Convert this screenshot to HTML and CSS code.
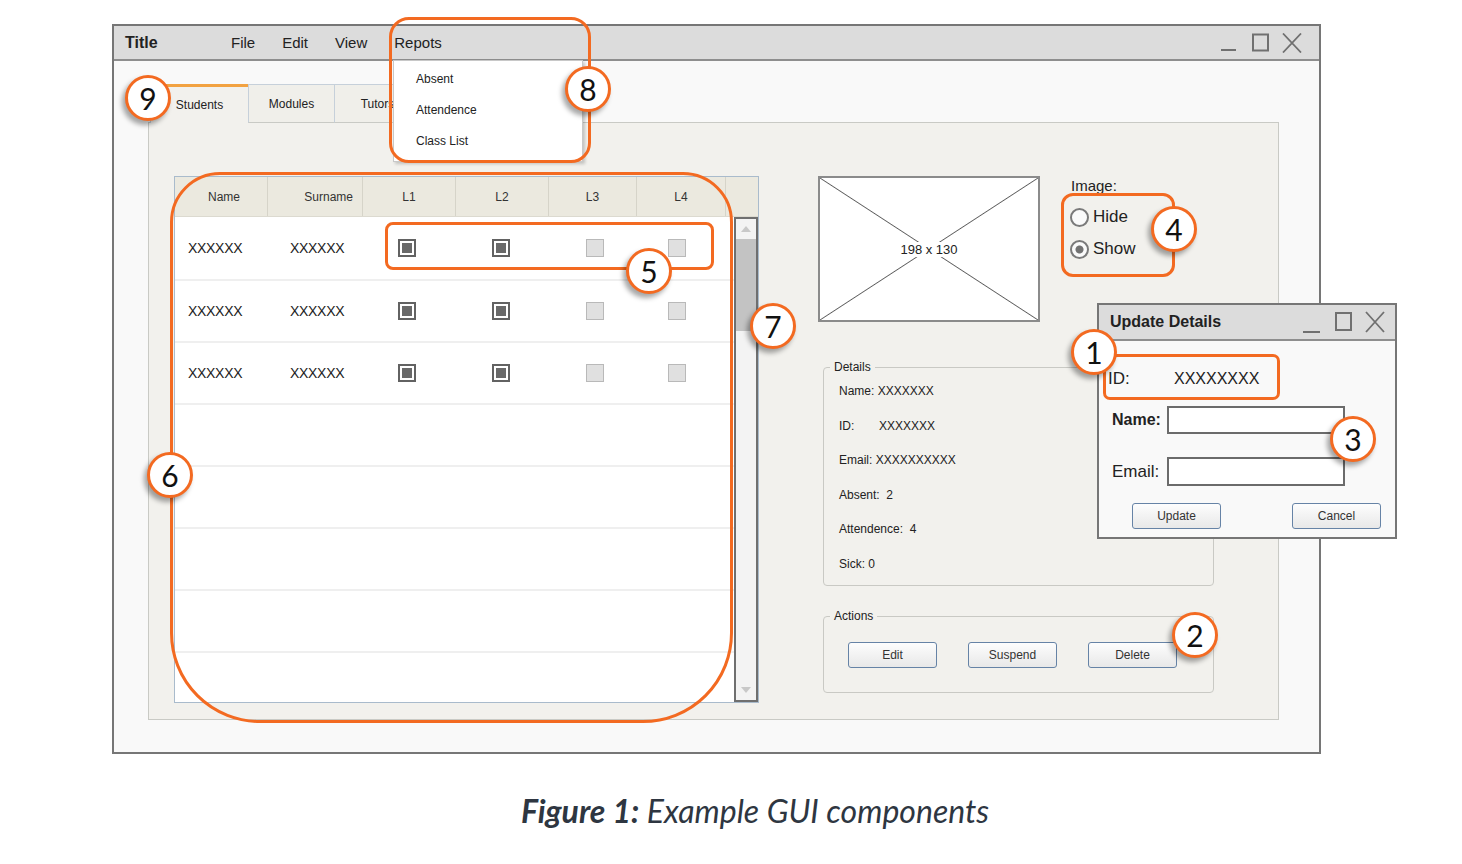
FILE: index.html
```html
<!DOCTYPE html>
<html lang="en">
<head>
    <meta charset="UTF-8">
    <meta name="viewport" content="width=device-width, initial-scale=1.0">
    <title>Example GUI components</title>
    <link rel="stylesheet" href="styles.css">
</head>
<body>
<div class="figure">

    <!-- main application window -->
    <div class="window main-window">
        <div class="titlebar">
            <span class="win-title">Title</span>
            <nav class="menu">
                <span>File</span>
                <span>Edit</span>
                <span>View</span>
                <span>Repots</span>
            </nav>
            <div class="win-controls">
                <svg class="ic-min" width="15" height="20" viewBox="0 0 15 20"><path d="M0 17H15" stroke="#707070" stroke-width="2"/></svg>
                <svg class="ic-max" width="17" height="20" viewBox="0 0 17 20"><rect x="1" y="1.5" width="15" height="16" fill="none" stroke="#707070" stroke-width="2"/></svg>
                <svg class="ic-close" width="20" height="20" viewBox="0 0 20 20"><path d="M1 0.5L19 19.5M19 0.5L1 19.5" stroke="#707070" stroke-width="1.8"/></svg>
            </div>
        </div>

        <div class="win-body">
            <div class="tabs">
                <div class="tab active">Students</div>
                <div class="tab">Modules</div>
                <div class="tab">Tutors</div>
            </div>

            <div class="tab-panel">
                <div class="grid">
                    <div class="grid-head">
                        <div class="name-head">Name</div>
                        <div class="right">Surname</div>
                        <div>L1</div>
                        <div>L2</div>
                        <div>L3</div>
                        <div>L4</div>
                        <div></div>
                    </div>
                    <div class="grid-body">
                        <div class="rows">
                            <div class="row first">
                                <div class="name">XXXXXX</div>
                                <div class="surname">XXXXXX</div>
                                <div class="check"><span class="cb on"></span></div>
                                <div class="check"><span class="cb on"></span></div>
                                <div class="check"><span class="cb"></span></div>
                                <div class="check"><span class="cb"></span></div>
                            </div>
                            <div class="row">
                                <div class="name">XXXXXX</div>
                                <div class="surname">XXXXXX</div>
                                <div class="check"><span class="cb on"></span></div>
                                <div class="check"><span class="cb on"></span></div>
                                <div class="check"><span class="cb"></span></div>
                                <div class="check"><span class="cb"></span></div>
                            </div>
                            <div class="row">
                                <div class="name">XXXXXX</div>
                                <div class="surname">XXXXXX</div>
                                <div class="check"><span class="cb on"></span></div>
                                <div class="check"><span class="cb on"></span></div>
                                <div class="check"><span class="cb"></span></div>
                                <div class="check"><span class="cb"></span></div>
                            </div>
                            <div class="row"></div>
                            <div class="row"></div>
                            <div class="row"></div>
                            <div class="row"></div>
                        </div>
                        <div class="scrollbar">
                            <span class="arrow-box"><span class="arrow up"></span></span>
                            <span class="thumb"></span>
                            <span class="track"></span>
                            <span class="arrow-box"><span class="arrow down"></span></span>
                        </div>
                    </div>
                </div>

                <div class="side">
                    <div class="img-row">
                        <div class="placeholder"><span>198 x 130</span></div>
                        <div class="img-options">
                            <div class="opt-label">Image:</div>
                            <div class="radio"><span class="radio-dot"></span>Hide</div>
                            <div class="radio"><span class="radio-dot on"></span>Show</div>
                        </div>
                    </div>

                    <fieldset class="group details">
                        <legend>Details</legend>
                        <p>Name: XXXXXXX</p>
                        <p><span class="id-label">ID:</span>XXXXXXX</p>
                        <p>Email: XXXXXXXXXX</p>
                        <p>Absent:&nbsp; 2</p>
                        <p>Attendence:&nbsp; 4</p>
                        <p>Sick: 0</p>
                    </fieldset>

                    <fieldset class="group actions">
                        <legend>Actions</legend>
                        <div class="btn-row">
                            <button class="btn">Edit</button>
                            <button class="btn">Suspend</button>
                            <button class="btn">Delete</button>
                        </div>
                    </fieldset>
                </div>
            </div>
        </div>
    </div>

    <!-- open "Repots" menu -->
    <div class="dropdown">
        <div class="dd-item">Absent</div>
        <div class="dd-item">Attendence</div>
        <div class="dd-item">Class List</div>
    </div>

    <!-- floating dialog -->
    <div class="window dialog">
        <div class="titlebar">
            <span class="win-title">Update Details</span>
            <div class="win-controls">
                <svg class="ic-min" width="17" height="22" viewBox="0 0 17 22"><path d="M0 21H17" stroke="#707070" stroke-width="2"/></svg>
                <svg class="ic-max" width="17" height="22" viewBox="0 0 17 22"><rect x="1" y="2" width="15" height="17" fill="none" stroke="#707070" stroke-width="2"/></svg>
                <svg class="ic-close" width="20" height="22" viewBox="0 0 20 22"><path d="M1 1L19 21M19 1L1 21" stroke="#707070" stroke-width="1.8"/></svg>
            </div>
        </div>
        <div class="dialog-body">
            <div class="id-row"><span class="label">ID:</span>XXXXXXXX</div>
            <div class="field name-field"><label>Name:</label><span class="input"></span></div>
            <div class="field email-field"><label>Email:</label><span class="input"></span></div>
            <div class="dialog-btns">
                <button class="btn">Update</button>
                <button class="btn">Cancel</button>
            </div>
        </div>
    </div>

    <!-- annotations -->
    <div class="ring ring-8"></div>
    <div class="ring ring-6"></div>
    <div class="ring ring-5"></div>
    <div class="ring ring-4"></div>
    <div class="ring ring-1"></div>

    <div class="badge b9">9</div>
    <div class="badge b8">8</div>
    <div class="badge b5">5</div>
    <div class="badge b7">7</div>
    <div class="badge b6">6</div>
    <div class="badge b4">4</div>
    <div class="badge b1">1</div>
    <div class="badge b3">3</div>
    <div class="badge b2">2</div>

    <p class="caption"><b>Figure 1:</b> Example GUI components</p>
</div>
</body>
</html>
```

FILE: styles.css
```css
/* base */
* {
    box-sizing: border-box;
}

body {
    margin: 0;
    background: #fff;
    font-family: "Liberation Sans", Arial, sans-serif;
    color: #222;
}

.figure {
    position: relative;
    width: 1462px;
    height: 864px;
    padding: 24px 0 0 112px;
}

/* windows */
.window {
    background: #f9f9f9;
    border: 2px solid #767676;
}

.main-window {
    width: 1209px;
    height: 730px;
    display: flex;
    flex-direction: column;
}

.titlebar {
    display: flex;
    align-items: center;
    height: 35px;
    flex-shrink: 0;
    background: #dcdcdc;
    border-bottom: 2px solid #8e8e8e;
}

.main-window .titlebar {
    padding: 0 17px 0 11px;
}

.win-title {
    font-size: 16px;
    font-weight: bold;
    color: #222;
}

.main-window .win-title {
    width: 106px;
}

.menu {
    display: flex;
    gap: 27px;
    font-size: 15px;
}

.win-controls {
    display: flex;
    align-items: center;
    margin-left: auto;
}

.win-controls svg {
    display: block;
}

.main-window .ic-max {
    margin-left: 16px;
}

.main-window .ic-close {
    margin-left: 13px;
}

/* tabs */
.win-body {
    flex: 1;
    display: flex;
    flex-direction: column;
    padding: 23px 40px 32px 34px;
}

.tabs {
    display: flex;
    height: 39px;
    margin: 0 0 -1px 2px;
    position: relative;
    z-index: 1;
}

.tab {
    width: 87px;
    margin-right: -1px;
    display: flex;
    align-items: center;
    justify-content: center;
    border: 1px solid #c6d0da;
    border-bottom-color: #c9cac5;
    background: #f0efea;
    font-size: 12px;
    color: #222;
}

.tab.active {
    width: 99px;
    border-top: 3px solid #f2a241;
    border-bottom: none;
    background: #f2f1ed;
}

.tab-panel {
    flex: 1;
    display: flex;
    align-items: flex-start;
    padding: 53px 0 0 25px;
    border: 1px solid #c9cac5;
    background: #f2f1ed;
}

/* data grid */
.grid {
    width: 585px;
    height: 527px;
    display: flex;
    flex-direction: column;
    border: 1px solid #a9bbcc;
    background: #fff;
}

.grid-head {
    height: 40px;
    display: grid;
    grid-template-columns: 93px 95px 93px 93px 88px 89px 1fr;
    background: #ebe9df;
    border-bottom: 1px solid #dcdad0;
    font-size: 12px;
    color: #333;
}

.grid-head div {
    display: flex;
    align-items: center;
    justify-content: center;
    border-right: 1px solid #d6d4c9;
}

.grid-head div:last-child {
    border-right: none;
}

.grid-head .name-head {
    padding-left: 6px;
}

.grid-head .right {
    justify-content: flex-end;
    padding-right: 9px;
}

.grid-body {
    flex: 1;
    display: flex;
}

.rows {
    flex: 1;
}

.row {
    height: 62px;
    display: grid;
    grid-template-columns: 93px 95px 93px 93px 88px 89px;
    align-items: center;
    border-bottom: 2px solid #efefef;
    font-size: 14px;
    letter-spacing: -0.3px;
}

.row.first {
    height: 64px;
}

.row .name {
    padding-left: 13px;
}

.row .surname {
    padding-left: 22px;
}

.row .check {
    display: flex;
}

.row .check:nth-child(3) { padding-left: 35px; }
.row .check:nth-child(4) { padding-left: 36px; }
.row .check:nth-child(5) { padding-left: 37px; }
.row .check:nth-child(6) { padding-left: 31px; }

.cb {
    width: 18px;
    height: 18px;
    border: 1px solid #b9b9b9;
    background: #e0e0e0;
}

.cb.on {
    border: 2px solid #626262;
    background: #696969;
    box-shadow: inset 0 0 0 2px #fff;
}

.scrollbar {
    width: 24px;
    display: flex;
    flex-direction: column;
    border: 2px solid #6f6f6f;
    background: #f3f3f3;
}

.arrow-box {
    height: 20px;
    display: flex;
    align-items: center;
    justify-content: center;
}

.arrow {
    width: 0;
    height: 0;
    border-left: 5px solid transparent;
    border-right: 5px solid transparent;
}

.arrow.up {
    border-bottom: 6px solid #c8c8c8;
}

.arrow.down {
    border-top: 6px solid #c8c8c8;
}

.thumb {
    height: 92px;
    background: #c3c3c3;
}

.track {
    flex: 1;
}

/* right column */
.side {
    margin-left: 59px;
    display: flex;
    flex-direction: column;
}

.img-row {
    display: flex;
    align-items: flex-start;
}

.placeholder {
    width: 222px;
    height: 146px;
    display: flex;
    align-items: center;
    justify-content: center;
    border: 2px solid #8b8b8b;
    background:
        linear-gradient(to top right, transparent calc(50% - 0.9px), #5e5e5e 50%, transparent calc(50% + 0.9px)),
        linear-gradient(to bottom right, transparent calc(50% - 0.9px), #5e5e5e 50%, transparent calc(50% + 0.9px)),
        #fff;
}

.placeholder span {
    background: #fff;
    padding: 0 2px;
    font-size: 13px;
    color: #222;
}

.img-options {
    margin-left: 31px;
}

.opt-label {
    font-size: 15px;
    line-height: 20px;
}

.radio {
    height: 32px;
    display: flex;
    align-items: center;
    gap: 4px;
    font-size: 17px;
}

.opt-label + .radio {
    margin-top: 5px;
}

.radio-dot {
    width: 19px;
    height: 19px;
    margin-left: -1px;
    border: 2px solid #7a7a7a;
    border-radius: 50%;
    background: #fafafa;
}

.radio-dot.on {
    background: radial-gradient(circle, #727272 0 3.5px, #fafafa 4.5px);
}

.group {
    width: 391px;
    margin: 0 0 0 5px;
    padding: 0 15px;
    border: 1px solid #c9c9c4;
    border-radius: 4px;
}

.group legend {
    padding: 0 4px;
    margin-left: -9px;
    font-size: 12px;
    line-height: 14px;
    color: #222;
}

.details {
    height: 226px;
    margin-top: 38px;
}

.details p {
    margin: 0;
    font-size: 12px;
    line-height: 34.6px;
}

.id-label {
    display: inline-block;
    width: 40px;
}

.actions {
    height: 84px;
    margin-top: 23px;
}

.btn-row {
    display: flex;
    gap: 31px;
    padding: 19px 0 0 9px;
}

.btn {
    width: 89px;
    height: 26px;
    padding: 0;
    border: 1px solid #6683a6;
    border-radius: 3px;
    background: linear-gradient(#fdfdfd, #e8e8e8);
    font-family: "Liberation Sans", Arial, sans-serif;
    font-size: 12px;
    color: #333;
}

/* dropdown menu */
.dropdown {
    position: absolute;
    left: 393px;
    top: 60px;
    width: 190px;
    height: 102px;
    z-index: 2;
    padding-top: 3px;
    background: #fff;
    border: 1px solid #c8c8c8;
    box-shadow: 2px 2px 3px rgba(0, 0, 0, 0.2);
}

.dd-item {
    height: 31px;
    line-height: 31px;
    padding-left: 22px;
    font-size: 12px;
}

/* dialog */
.dialog {
    position: absolute;
    left: 1097px;
    top: 303px;
    width: 300px;
    height: 236px;
    z-index: 2;
}

.dialog .titlebar {
    height: 36px;
    padding: 0 10px 0 11px;
}

.dialog .ic-max {
    margin-left: 15px;
}

.dialog .ic-close {
    margin-left: 13px;
}

.dialog-body {
    padding: 26px 14px 0 9px;
}

.id-row {
    display: flex;
    font-size: 16px;
    line-height: 24px;
}

.id-row .label {
    width: 66px;
    font-size: 17px;
}

.field {
    display: flex;
    align-items: center;
    padding-left: 4px;
    font-size: 17px;
}

.field label {
    width: 55px;
}

.name-field {
    margin-top: 15px;
}

.name-field label {
    font-weight: bold;
    font-size: 16px;
}

.email-field {
    margin-top: 23px;
}

.input {
    width: 178px;
    height: 28px;
    border: 2px solid #6b6b6b;
    background: #fff;
}

.email-field .input {
    height: 29px;
}

.dialog-btns {
    display: flex;
    justify-content: space-between;
    margin-top: 17px;
    padding-left: 24px;
}

/* annotations */
.ring {
    position: absolute;
    z-index: 3;
    border: 3px solid #f36a21;
}

.ring-8 { left: 389px; top: 17px; width: 202px; height: 146px; border-radius: 20px; }
.ring-6 { left: 170px; top: 172px; width: 563px; height: 551px; border-radius: 50px 50px 90px 90px; }
.ring-5 { left: 385px; top: 222px; width: 329px; height: 48px; border-radius: 8px; }
.ring-4 { left: 1061px; top: 193px; width: 114px; height: 84px; border-radius: 12px; }
.ring-1 { left: 1103px; top: 354px; width: 177px; height: 46px; border-radius: 7px; }

.badge {
    position: absolute;
    z-index: 4;
    width: 46px;
    height: 46px;
    border: 3px solid #f36a21;
    border-radius: 50%;
    background: #fff;
    box-shadow: -3px 4px 5px rgba(0, 0, 0, 0.35);
    font-family: Lato, "Open Sans", sans-serif;
    font-size: 30px;
    line-height: 40px;
    text-align: center;
    color: #111;
}

.b9 { left: 125px; top: 75px; }
.b8 { left: 565px; top: 66px; }
.b5 { left: 626px; top: 248px; }
.b7 { left: 750px; top: 303px; }
.b6 { left: 147px; top: 452px; }
.b4 { left: 1151px; top: 206px; }
.b1 { left: 1071px; top: 329px; }
.b3 { left: 1330px; top: 416px; }
.b2 { left: 1172px; top: 612px; }

/* caption */
.caption {
    width: 1286px;
    margin: 38px 0 0;
    text-align: center;
    font-family: Lato, "Open Sans", sans-serif;
    font-style: italic;
    font-size: 32px;
    line-height: 38px;
    color: #2e3641;
}
```
